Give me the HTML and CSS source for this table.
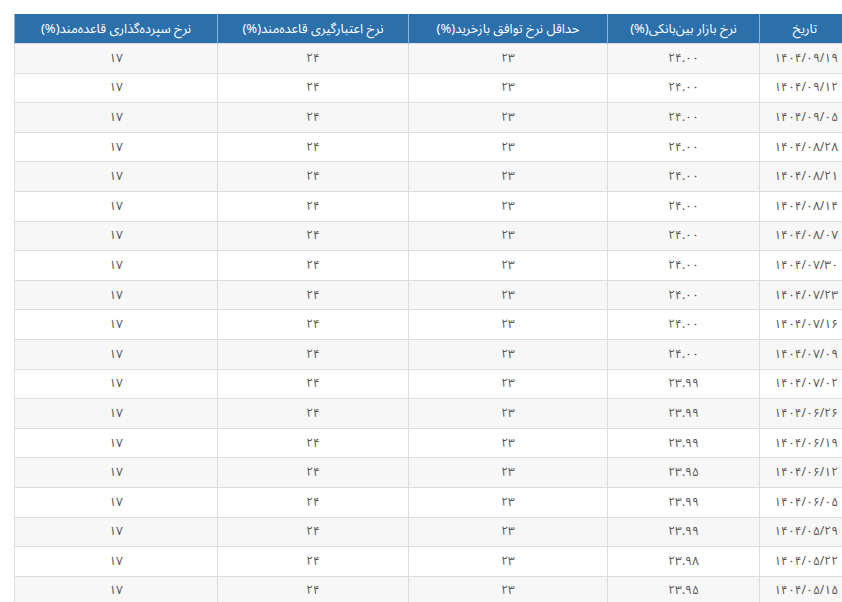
FILE: index.html
```html
<!DOCTYPE html>
<html lang="fa" dir="rtl">
<head>
<meta charset="utf-8">
<link rel="stylesheet" href="styles.css">
</head>
<body>
<div class="page">
<table class="rates">
<colgroup>
<col class="c-date"><col class="c-bank"><col class="c-repo"><col class="c-credit"><col class="c-deposit">
</colgroup>
<thead>
<tr><th>تاریخ</th><th>نرخ بازار بین‌بانکی(%)</th><th>حداقل نرخ توافق بازخرید(%)</th><th>نرخ اعتبارگیری قاعده‌مند(%)</th><th>نرخ سپرده‌گذاری قاعده‌مند(%)</th></tr>
</thead>
<tbody>
<tr><td>۱۴۰۴/۰۹/۱۹</td><td>۲۴.۰۰</td><td>۲۳</td><td>۲۴</td><td>۱۷</td></tr>
<tr><td>۱۴۰۴/۰۹/۱۲</td><td>۲۴.۰۰</td><td>۲۳</td><td>۲۴</td><td>۱۷</td></tr>
<tr><td>۱۴۰۴/۰۹/۰۵</td><td>۲۴.۰۰</td><td>۲۳</td><td>۲۴</td><td>۱۷</td></tr>
<tr><td>۱۴۰۴/۰۸/۲۸</td><td>۲۴.۰۰</td><td>۲۳</td><td>۲۴</td><td>۱۷</td></tr>
<tr><td>۱۴۰۴/۰۸/۲۱</td><td>۲۴.۰۰</td><td>۲۳</td><td>۲۴</td><td>۱۷</td></tr>
<tr><td>۱۴۰۴/۰۸/۱۴</td><td>۲۴.۰۰</td><td>۲۳</td><td>۲۴</td><td>۱۷</td></tr>
<tr><td>۱۴۰۴/۰۸/۰۷</td><td>۲۴.۰۰</td><td>۲۳</td><td>۲۴</td><td>۱۷</td></tr>
<tr><td>۱۴۰۴/۰۷/۳۰</td><td>۲۴.۰۰</td><td>۲۳</td><td>۲۴</td><td>۱۷</td></tr>
<tr><td>۱۴۰۴/۰۷/۲۳</td><td>۲۴.۰۰</td><td>۲۳</td><td>۲۴</td><td>۱۷</td></tr>
<tr><td>۱۴۰۴/۰۷/۱۶</td><td>۲۴.۰۰</td><td>۲۳</td><td>۲۴</td><td>۱۷</td></tr>
<tr><td>۱۴۰۴/۰۷/۰۹</td><td>۲۴.۰۰</td><td>۲۳</td><td>۲۴</td><td>۱۷</td></tr>
<tr><td>۱۴۰۴/۰۷/۰۲</td><td>۲۳.۹۹</td><td>۲۳</td><td>۲۴</td><td>۱۷</td></tr>
<tr><td>۱۴۰۴/۰۶/۲۶</td><td>۲۳.۹۹</td><td>۲۳</td><td>۲۴</td><td>۱۷</td></tr>
<tr><td>۱۴۰۴/۰۶/۱۹</td><td>۲۳.۹۹</td><td>۲۳</td><td>۲۴</td><td>۱۷</td></tr>
<tr><td>۱۴۰۴/۰۶/۱۲</td><td>۲۳.۹۵</td><td>۲۳</td><td>۲۴</td><td>۱۷</td></tr>
<tr><td>۱۴۰۴/۰۶/۰۵</td><td>۲۳.۹۹</td><td>۲۳</td><td>۲۴</td><td>۱۷</td></tr>
<tr><td>۱۴۰۴/۰۵/۲۹</td><td>۲۳.۹۹</td><td>۲۳</td><td>۲۴</td><td>۱۷</td></tr>
<tr><td>۱۴۰۴/۰۵/۲۲</td><td>۲۳.۹۸</td><td>۲۳</td><td>۲۴</td><td>۱۷</td></tr>
<tr><td>۱۴۰۴/۰۵/۱۵</td><td>۲۳.۹۵</td><td>۲۳</td><td>۲۴</td><td>۱۷</td></tr>
</tbody>
</table>
</div>
</body>
</html>
```
FILE: styles.css
```css
html, body {
  margin: 0;
  padding: 0;
  background: #ffffff;
  overflow: hidden;
}
.page {
  width: 842px;
  height: 602px;
  overflow: hidden;
  padding-top: 14px;
  box-sizing: border-box;
  direction: rtl;
}
.rates {
  border-collapse: collapse;
  table-layout: fixed;
  width: 836px;
  margin-right: -9px;
  font-family: "Noto Sans Arabic", "Noto Naskh Arabic", "Vazirmatn", "Vazir", "Sahel", "DejaVu Sans", sans-serif;
}
.c-date { width: 91px; }
.c-bank { width: 152px; }
.c-repo { width: 199px; }
.c-credit { width: 191px; }
.c-deposit { width: 203px; }
.rates th {
  background: #2b6fab;
  color: #ffffff;
  font-size: 13px;
  font-weight: normal;
  height: 29px;
  padding: 0 6px;
  text-align: center;
  border-left: 1px solid #8fb4d6;
  border-right: 1px solid #8fb4d6;
  white-space: nowrap;
}
.rates td {
  height: 28.6px;
  padding: 0 6px;
  font-size: 12px;
  color: #555555;
  text-align: center;
  border: 1px solid #dddddd;
}
.rates td:first-child {
  text-align: right;
  padding-right: 12px;
}
.rates tbody tr:nth-child(odd) td {
  background: #f7f7f7;
}
```
